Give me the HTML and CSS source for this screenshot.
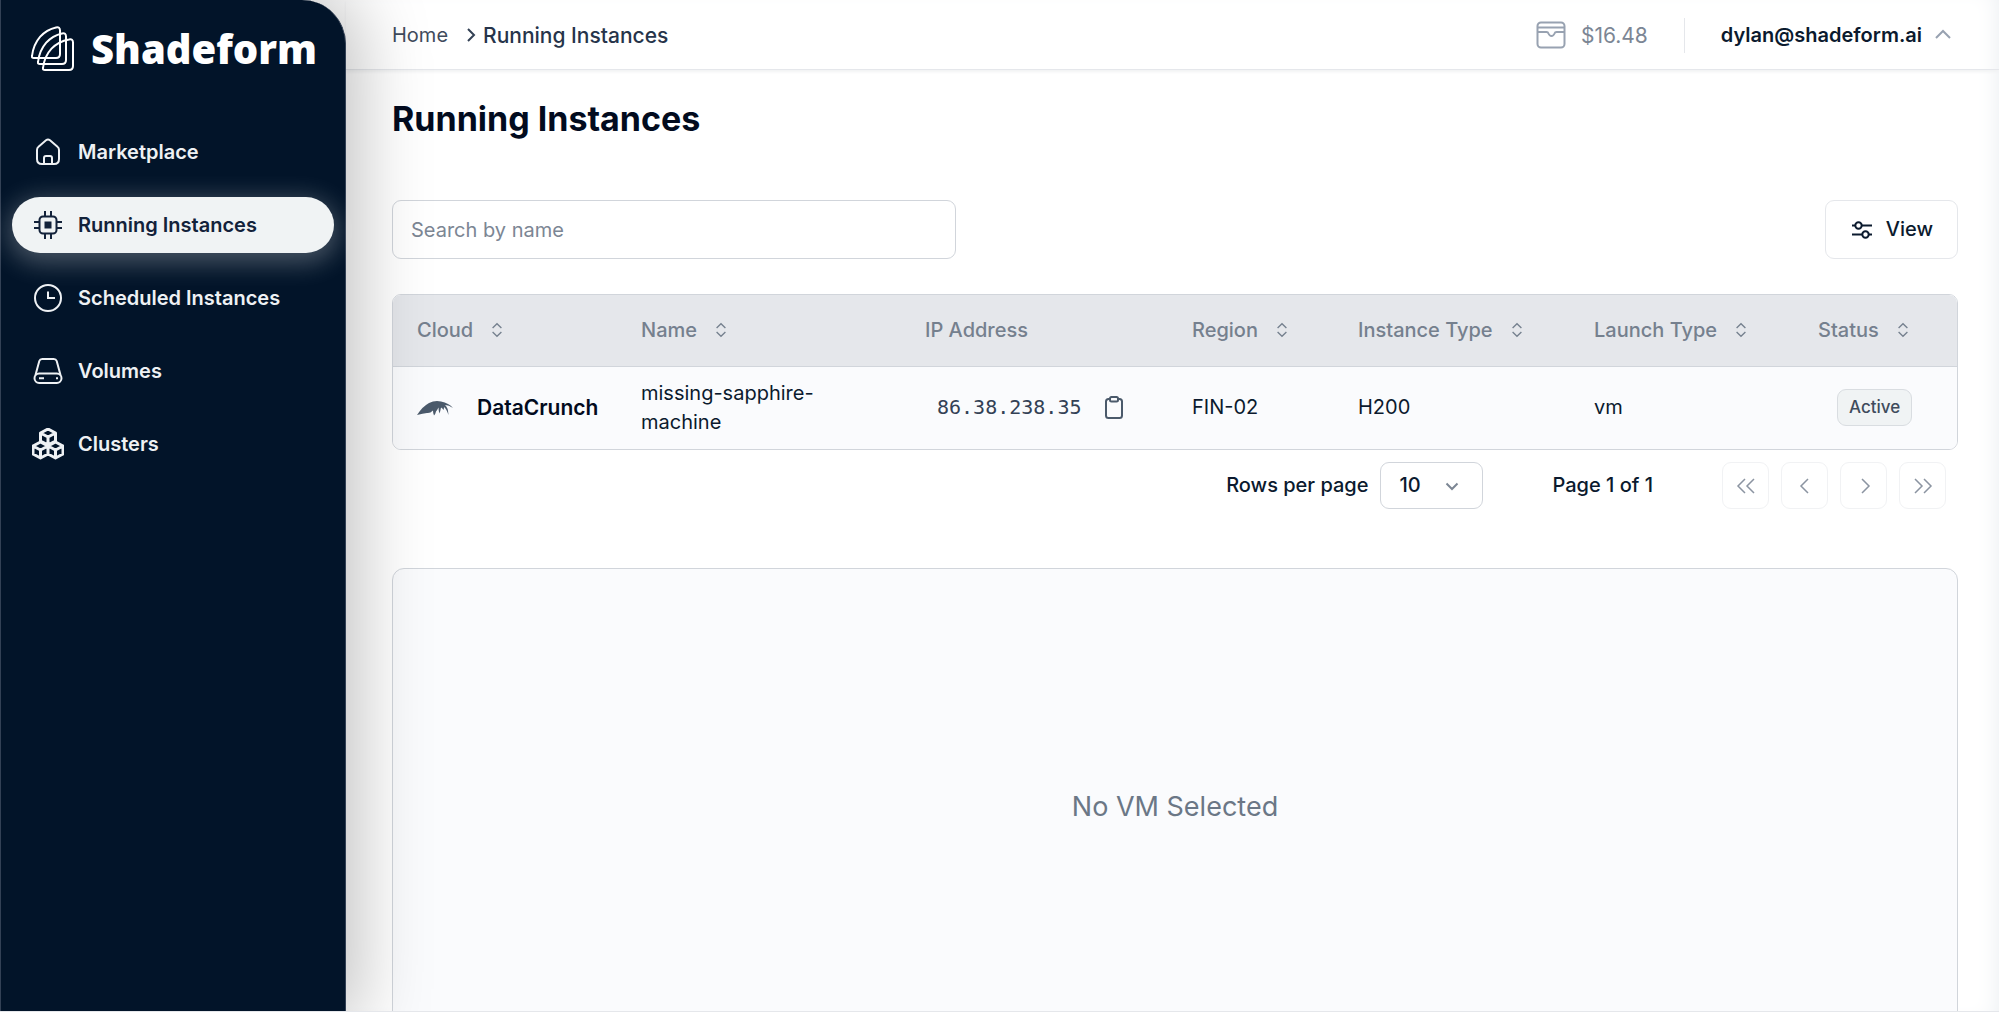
FILE: index.html
```html
<!DOCTYPE html>
<html lang="en">
<head>
<meta charset="utf-8">
<title>Running Instances - Shadeform</title>
<meta name="viewport" content="width=device-width, initial-scale=1">
<link rel="stylesheet" href="styles.css">
</head>
<body>
<svg class="sprite" aria-hidden="true">
  <symbol id="sort" viewBox="0 0 15 15"><path d="M4.2 6 7.500 2.800 10.800 6M4.200 9l3.300 3.200L10.800 9"/></symbol>
</svg>
<div class="app">
  <aside class="sidebar">
    <a class="brand" href="#">
      <svg class="brand-mark" viewBox="0 0 44 46" fill="none" stroke="currentColor" stroke-width="2" stroke-linejoin="round">
        <path d="M1 30C3 14 13 4 25 1.400q4-.9 4 3V28q0 4-4 4H3q-2.500 0-2-2Z"/>
        <path d="M7 36C9 20 19 10 31 7.400q4-.9 4 3V34q0 4-4 4H9q-2.500 0-2-2Z"/>
        <path d="M12 42C14 26 24 16 38 13.400q4-.9 4 3V40q0 4-4 4H14q-2.500 0-2-2Z"/>
      </svg>
      <span class="brand-name">Shadeform</span>
    </a>
    <nav class="nav">
      <a class="nav-link" href="#">
        <svg class="nav-icon" viewBox="0 0 32 32"><path d="M5 14v9q0 5 5 5h12q5 0 5-5V14q0-2-1.500-3.200L18 4.300q-2-1.600-4 0l-7.500 6.500Q5 12 5 14Z"/><path d="M12 28v-6q0-2 2-2h4q2 0 2 2v6"/></svg>
        Marketplace
      </a>
      <a class="nav-link active" href="#" aria-current="page">
        <svg class="nav-icon" viewBox="0 0 32 32"><rect x="7.500" y="7.500" width="17" height="17" rx="3.500"/><rect class="solid" x="13.500" y="13.500" width="5" height="5"/><path d="M13 7V2M19 7V2M13 30v-5M19 30v-5M7 13H2M7 19H2M30 13h-5M30 19h-5"/></svg>
        Running Instances
      </a>
      <a class="nav-link" href="#">
        <svg class="nav-icon" viewBox="0 0 32 32"><circle cx="16" cy="16" r="13"/><path d="M16 9.500V16h7"/></svg>
        Scheduled Instances
      </a>
      <a class="nav-link" href="#">
        <svg class="nav-icon" viewBox="0 0 32 32"><path d="M3.500 20 7.300 6q.7-2 3-2h11.400q2.300 0 3 2l3.800 14"/><rect x="2.500" y="18.500" width="27" height="9.500" rx="4.700"/><path d="M7 23.300h5M24 23.300h2"/></svg>
        Volumes
      </a>
      <a class="nav-link" href="#">
        <svg class="nav-icon" viewBox="0 0 32 32" stroke-linejoin="round"><path class="heavy" d="m16 1 7.500 4v8L16 17l-7.500-4V5ZM8.500 5 16 9l7.500-4M16 9v8M8.500 14 16 18v8l-7.500 4L1 26v-8ZM1 18l7.500 4 7.500-4M8.500 22v8M23.500 14l7.500 4v8l-7.500 4-7.500-4v-8ZM16 18l7.500 4 7.500-4M23.500 22v8"/></svg>
        Clusters
      </a>
    </nav>
  </aside>

  <div class="page">
    <header class="topbar">
      <nav class="crumbs" aria-label="Breadcrumb">
        <a class="crumb" href="#">Home</a>
        <svg class="crumb-sep" viewBox="0 0 12 18"><path d="m3 3 6 6-6 6"/></svg>
        <span class="crumb current">Running Instances</span>
      </nav>
      <div class="account">
        <a class="balance" href="#">
          <svg class="wallet" viewBox="0 0 30 30"><rect x="1.500" y="2.500" width="27" height="25" rx="3.500"/><path d="M2 7.500h26M2 12h8.500q1.500 0 2 1.500 1 2.500 3 2.500t3-2.500q.5-1.500 2-1.500H28"/></svg>
          $16.48
        </a>
        <button class="user" type="button">dylan@shadeform.ai
          <svg class="caret" viewBox="0 0 20 20"><path d="m3 13 7-7 7 7"/></svg>
        </button>
      </div>
    </header>

    <main class="content">
      <h1 class="title">Running Instances</h1>

      <div class="toolbar">
        <input class="search" type="search" placeholder="Search by name" aria-label="Search by name">
        <button class="view" type="button">
          <svg class="view-icon" viewBox="0 0 22 22"><path d="M1 6.500h3M11 6.500h10M1 15.500h10M18 15.500h3"/><circle cx="7.500" cy="6.500" r="3.200"/><circle cx="14.500" cy="15.500" r="3.200"/></svg>
          View
        </button>
      </div>

      <div class="table-box">
        <table class="instances">
          <colgroup><col class="c-cloud"><col class="c-name"><col class="c-ip"><col class="c-region"><col class="c-type"><col class="c-launch"><col class="c-status"></colgroup>
          <thead>
            <tr>
              <th scope="col"><button class="sort" type="button">Cloud <svg><use href="#sort"/></svg></button></th>
              <th scope="col"><button class="sort" type="button">Name <svg><use href="#sort"/></svg></button></th>
              <th scope="col">IP Address</th>
              <th scope="col"><button class="sort" type="button">Region <svg><use href="#sort"/></svg></button></th>
              <th scope="col"><button class="sort" type="button">Instance Type <svg><use href="#sort"/></svg></button></th>
              <th scope="col"><button class="sort" type="button">Launch Type <svg><use href="#sort"/></svg></button></th>
              <th scope="col"><button class="sort" type="button">Status <svg><use href="#sort"/></svg></button></th>
            </tr>
          </thead>
          <tbody>
            <tr>
              <td>
                <div class="cloud">
                  <svg class="cloud-logo" viewBox="0 0 36 16"><path d="M0 15Q6 6 12 3 18 0 24 1.500q8 1.500 12 6.500-4-3-8-3 3 2 3.500 10-2-6-4.500-8 0 2-.5 3-1-2-2.500-2.500-.5 3-1.500 6-1-3-1-6-1.500 3-2.500 4-.3 2-2 4-1-2-1-5-3 3-6 2.500-4 .5-10 2Z"/></svg>
                  DataCrunch
                </div>
              </td>
              <td>missing-sapphire-<br>machine</td>
              <td>
                <div class="ip">86.38.238.35
                  <button class="copy" type="button" aria-label="Copy IP address"><svg viewBox="0 0 20 24"><path d="M6 3H4.500Q2 3 2 5.500v14Q2 22 4.500 22h11q2.500 0 2.500-2.500v-14Q18 3 15.500 3H14"/><rect x="6" y="1" width="8" height="4.500" rx="1.500"/></svg></button>
                </div>
              </td>
              <td>FIN-02</td>
              <td>H200</td>
              <td>vm</td>
              <td class="status"><span class="badge">Active</span></td>
            </tr>
          </tbody>
        </table>
      </div>

      <div class="pager">
        <label class="rows">Rows per page
          <span class="select-wrap">
            <select class="select"><option>10</option><option>20</option></select>
            <svg class="select-caret" viewBox="0 0 16 16"><path d="m2.500 5.500 5.500 5.500 5.500-5.500"/></svg>
          </span>
        </label>
        <span class="page-no">Page 1 of 1</span>
        <div class="pages">
          <button class="page-btn" type="button" disabled aria-label="First page"><svg viewBox="0 0 20 20"><path d="m9 3-7 7 7 7M18 3l-7 7 7 7"/></svg></button>
          <button class="page-btn" type="button" disabled aria-label="Previous page"><svg viewBox="0 0 20 20"><path d="m13 3-7 7 7 7"/></svg></button>
          <button class="page-btn" type="button" disabled aria-label="Next page"><svg viewBox="0 0 20 20"><path d="m8 3 7 7-7 7"/></svg></button>
          <button class="page-btn" type="button" disabled aria-label="Last page"><svg viewBox="0 0 20 20"><path d="m2 3 7 7-7 7M11 3l7 7-7 7"/></svg></button>
        </div>
      </div>

      <section class="detail"><p>No VM Selected</p></section>
    </main>
  </div>
</div>
</body>
</html>
```
FILE: styles.css
```css
* { box-sizing: border-box; }

body {
  margin: 0;
  background: #fff;
  color: #0b1a2e;
  font: 400 20px/29px Inter, "Liberation Sans", sans-serif;
}

a { color: inherit; text-decoration: none; }
button, input, select { font: inherit; color: inherit; }
button { background: none; border: 0; padding: 0; }
svg { flex: none; fill: none; stroke: currentColor; stroke-width: 2; }
.sprite { display: none; }

.app {
  display: flex;
  height: calc(100vh - 1px);
  border-bottom: 1px solid #e5e7eb;
  overflow: hidden;
  box-shadow: inset -16px 0 24px -16px #e9edf0;
}

/* Sidebar */
.sidebar {
  position: relative;
  z-index: 1;
  flex: none;
  width: 346px;
  border: solid #334155;
  border-width: 0 1px;
  border-top-right-radius: 44px;
  background: #021429;
  color: #eef1f4;
  box-shadow: 0 0 72px 12px rgb(0 0 0 / 25%);
}
.brand {
  display: flex;
  align-items: center;
  gap: 16px;
  padding: 26px 0 0 30px;
  color: #fff;
}
.brand-mark { width: 44px; height: 46px; }
.brand-name { font: 900 40px/46px "Noto Sans", sans-serif; }

.nav {
  display: grid;
  gap: 17px;
  padding: 52px 11px 0;
}
.nav-link {
  display: flex;
  align-items: center;
  gap: 14px;
  height: 56px;
  padding-left: 20px;
  border-radius: 28px;
  font-weight: 600;
}
.nav-link.active {
  background: #f0f3f4;
  color: #13223a;
  box-shadow: 0 6px 26px 4px rgb(255 255 255 / 28%);
}
.nav-icon { width: 32px; height: 32px; }
.nav-icon .solid { fill: currentColor; }
.nav-icon .heavy { stroke-width: 3; }

/* Top bar */
.page {
  flex: 1;
  min-width: 0;
  display: flex;
  flex-direction: column;
}
.topbar {
  display: flex;
  align-items: center;
  justify-content: space-between;
  height: 70px;
  flex: none;
  padding: 1px 46px 0;
  border-bottom: 1px solid #e5e7eb;
  box-shadow: 0 2px 3px #f1f2f3;
}
.crumbs, .account, .balance, .user { display: flex; align-items: center; }
.crumb { color: #3f4b5c; }
.crumb.current { color: #26344a; font-size: 21px; font-weight: 500; }
.crumb-sep { width: 12px; height: 18px; margin: 0 6px 0 17px; color: #334155; }
.balance { gap: 15px; color: #7c8694; font-size: 21px; }
.wallet { width: 30px; height: 30px; color: #98a2b1; }
.user {
  gap: 11px;
  height: 35px;
  margin-left: 36px;
  padding-left: 36px;
  border-left: 1px solid #e5e7eb;
  font-weight: 600;
}
.caret { width: 20px; height: 20px; color: #98a2b1; }

/* Content */
.content {
  flex: 1;
  min-height: 0;
  display: flex;
  flex-direction: column;
  padding: 28px 41px 0 46px;
}
.content > * { flex-shrink: 0; }
.title { margin: 0; font-size: 34px; line-height: 42px; font-weight: 700; color: #020b1e; }
.toolbar {
  display: flex;
  justify-content: space-between;
  margin-top: 60px;
}
.search {
  width: 564px;
  height: 59px;
  padding: 0 18px;
  border: 1px solid #d1d5db;
  border-radius: 9px;
  background: transparent;
  appearance: none;
}
.search::placeholder { color: #7c8694; opacity: 1; }
.view {
  display: flex;
  align-items: center;
  gap: 13px;
  height: 59px;
  padding: 0 24px 0 25px;
  border: 1px solid #e5e7eb;
  border-radius: 9px;
  font-weight: 500;
}
.view-icon { width: 22px; height: 22px; }

/* Instance table */
.table-box {
  margin-top: 35px;
  border: 1px solid #d1d5db;
  border-radius: 9px;
  overflow: hidden;
}
.instances { width: 100%; border-collapse: collapse; table-layout: fixed; background: #fafbfd; }
.instances th {
  height: 71px;
  padding: 0 0 0 24px;
  border-bottom: 1px solid #d1d5db;
  background: #e5e7eb;
  color: #75808e;
  font-weight: 500;
  text-align: left;
}
.instances td { height: 83px; padding: 0 0 0 24px; }
.c-cloud { width: 224px; }
.c-name { width: 284px; }
.c-ip { width: 267px; }
.c-region { width: 166px; }
.c-type { width: 236px; }
.c-launch { width: 224px; }
.sort { display: flex; align-items: center; gap: 14px; }
.sort svg { width: 20px; height: 20px; stroke-width: 1; }
.cloud { display: flex; align-items: center; gap: 24px; font-size: 21px; font-weight: 600; color: #020b1e; }
.cloud-logo { width: 36px; height: 16px; fill: #4b5a6b; stroke: none; }
.ip {
  display: flex;
  align-items: center;
  gap: 22px;
  padding-left: 12px;
  font-family: "DejaVu Sans Mono", monospace;
  color: #334155;
}
.copy { display: flex; color: #4b5a6b; }
.copy svg { width: 20px; height: 24px; }
.instances .status { padding-left: 43px; }
.badge {
  display: inline-block;
  padding: 3px 11px;
  border: 1px solid #d9dde1;
  border-radius: 9px;
  background: #f0f3f4;
  color: #3f4b5c;
  font-size: 17px;
  font-weight: 500;
}

/* Pager */
.pager {
  display: flex;
  align-items: center;
  justify-content: flex-end;
  margin-top: 12px;
  padding-right: 12px;
  font-weight: 500;
}
.rows { display: flex; align-items: center; gap: 12px; }
.select-wrap { display: grid; align-items: center; }
.select {
  grid-area: 1 / 1;
  width: 103px;
  height: 47px;
  padding: 0 18px;
  border: 1px solid #d1d5db;
  border-radius: 9px;
  background: transparent;
  appearance: none;
}
.select-caret { grid-area: 1 / 1; justify-self: end; width: 16px; height: 16px; margin-right: 23px; color: #7c8694; pointer-events: none; }
.page-no { margin: 0 69px; }
.pages { display: flex; gap: 12px; }
.page-btn {
  display: grid;
  place-items: center;
  width: 47px;
  height: 47px;
  border: 1px solid #f1f2f4;
  border-radius: 9px;
  color: #8b94a1;
}
.page-btn svg { width: 20px; height: 20px; stroke-width: 1.5; }

/* Detail panel, runs past the bottom of the window */
.detail {
  flex: 1 0 476px;
  display: grid;
  place-items: center;
  margin-top: 59px;
  border: 1px solid #d1d5db;
  border-radius: 12px;
  background: #fafbfd;
  color: #6b7786;
  font-size: 27px;
}
.detail p { margin: 0; }
```
